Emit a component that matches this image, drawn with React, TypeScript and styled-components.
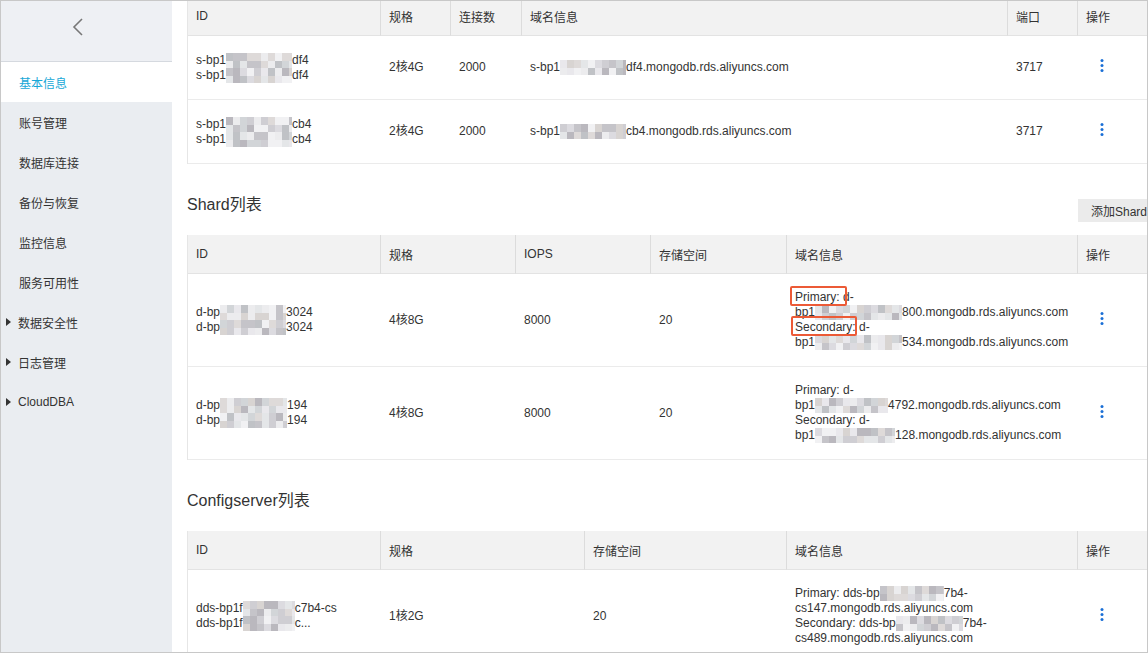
import React from "react";
import styled, { createGlobalStyle } from "styled-components";

const GlobalStyle = createGlobalStyle`
  html, body {
    margin: 0;
    padding: 0;
    background: #fff;
  }
  body {
    font-family: "Liberation Sans", Arial, "Noto Sans CJK SC", sans-serif;
    font-size: 12px;
    color: #333;
  }
`;

const Frame = styled.div`
  width: 1148px;
  height: 653px;
  box-sizing: border-box;
  border: 1px solid #c8c8c8;
  display: flex;
  overflow: hidden;
`;

const Sidebar = styled.nav`
  width: 171px;
  flex: none;
  background: #eaedf1;
  display: flex;
  flex-direction: column;
`;

const SideHead = styled.div`
  height: 61px;
  border-bottom: 1px solid #d5d9df;
  background: #eef0f4;
  display: flex;
  align-items: flex-start;
  padding: 17px 0 0 71px;
  box-sizing: border-box;
`;

const NavItem = styled.div<{ $active?: boolean; $tree?: boolean }>`
  height: 40px;
  display: flex;
  align-items: center;
  gap: 7px;
  padding-left: ${(p) => (p.$tree ? 5 : 18)}px;
  background: ${(p) => (p.$active ? "#fff" : "transparent")};
  color: ${(p) => (p.$active ? "#17a8d7" : "#333")};
  font-size: 12px;
`;

const Caret = styled.span`
  width: 0;
  height: 0;
  border-top: 4px solid transparent;
  border-bottom: 4px solid transparent;
  border-left: 5px solid #333;
`;

const Main = styled.main`
  flex: 1;
  min-width: 0;
  background: #fff;
  padding-left: 15px;
  overflow: hidden;
`;

const Content = styled.div`
  width: 960px;
`;

const SectionHead = styled.div`
  display: flex;
  justify-content: space-between;
  align-items: flex-end;
  margin: 29px 0 12px;
`;

const SectionTitle = styled.h3`
  margin: 0;
  padding-bottom: 6px;
  font-size: 16px;
  line-height: 24px;
  font-weight: normal;
  color: #333;
`;

const AddButton = styled.button`
  flex: none;
  height: 23px;
  margin: 0 -13px 1px 0;
  padding: 0 13px;
  border: none;
  background: #ebebeb;
  font: inherit;
  font-size: 12px;
  color: #333;
`;

const Table = styled.table<{ $lift?: boolean }>`
  width: 960px;
  table-layout: fixed;
  border-collapse: separate;
  border-spacing: 0;
  border-left: 1px solid #e6e6e6;
  margin-top: ${(p) => (p.$lift ? -4 : 0)}px;
`;

const Th = styled.th`
  height: 38px;
  padding: 0 8px;
  text-align: left;
  font-weight: normal;
  font-size: 12px;
  color: #333;
  background: #f2f2f2;
  border-bottom: 1px solid #e3e3e3;
  border-right: 1px solid #dcdcdc;
  &:last-child {
    border-right: none;
  }
`;

const Td = styled.td<{ $h: number }>`
  height: ${(p) => p.$h}px;
  padding: 0 8px;
  vertical-align: middle;
  line-height: 15px;
  white-space: nowrap;
  border-bottom: 1px solid #ebebeb;
  color: #333;
`;

const KebabCell = styled(Td)`
  padding-left: 22px;
`;

const KebabSvg = styled.svg`
  display: block;
  fill: #1a6fd6;
  transform: translateY(-2px);
`;

const BlurBox = styled.span<{ $w: number }>`
  display: inline-block;
  width: ${(p) => p.$w}px;
  height: 15px;
  vertical-align: top;
`;

const Marked = styled.span<{ $l: number; $r: number }>`
  position: relative;
  &::after {
    content: "";
    position: absolute;
    left: -${(p) => p.$l}px;
    right: -${(p) => p.$r}px;
    top: -4px;
    bottom: -2px;
    border: 2px solid #ec5a36;
    border-radius: 2px;
  }
`;

const PALETTE = [
  "#e9e8ec",
  "#dcdbe0",
  "#cfced3",
  "#c5c4c9",
  "#d8d4d2",
  "#e4e6e8",
  "#c0c2c6",
  "#f1f1f3",
  "#d2d5d8",
  "#bab8be",
  "#dedad9",
  "#ececee",
];

function mosaic(w: number, seed: number) {
  let s = (seed * 7919 + 104729) % 233280;
  const rnd = () => {
    s = (s * 9301 + 49297) % 233280;
    return s / 233280;
  };
  const row = () => {
    const stops: string[] = [];
    for (let x = 0; x < w; x += 7) {
      const c = PALETTE[Math.floor(rnd() * PALETTE.length)];
      stops.push(`${c} ${x}px ${Math.min(x + 7, w)}px`);
    }
    return `linear-gradient(90deg, ${stops.join(", ")})`;
  };
  return `${row()} 0 0 / 100% 8px no-repeat, ${row()} 0 8px / 100% 7px no-repeat`;
}

const Blur = ({ w, seed }: { w: number; seed: number }) => (
  <BlurBox $w={w} style={{ background: mosaic(w, seed) }} />
);

const Kebab = () => (
  <KebabSvg width="4" height="13" viewBox="0 0 4 13">
    <circle cx="2" cy="1.5" r="1.5" />
    <circle cx="2" cy="6.5" r="1.5" />
    <circle cx="2" cy="11.5" r="1.5" />
  </KebabSvg>
);

const Chevron = () => (
  <svg width="12" height="18" viewBox="0 0 12 18">
    <polyline points="10,1 2,9 10,17" fill="none" stroke="#777" strokeWidth="1.6" />
  </svg>
);

type Col = { label: string; width: number };

const DataTable = ({
  cols,
  rows,
  rowHeight,
  lift,
}: {
  cols: Col[];
  rows: React.ReactNode[][];
  rowHeight: number;
  lift?: boolean;
}) => (
  <Table $lift={lift}>
    <colgroup>
      {cols.map((c) => (
        <col key={c.label} style={{ width: c.width }} />
      ))}
    </colgroup>
    <thead>
      <tr>
        {cols.map((c) => (
          <Th key={c.label}>{c.label}</Th>
        ))}
      </tr>
    </thead>
    <tbody>
      {rows.map((r, i) => (
        <tr key={i}>
          {r.map((cell, j) => (
            <Td key={j} $h={rowHeight}>
              {cell}
            </Td>
          ))}
          <KebabCell $h={rowHeight}>
            <Kebab />
          </KebabCell>
        </tr>
      ))}
    </tbody>
  </Table>
);

const DOMAIN = ".mongodb.rds.aliyuncs.com";

const mongosCols: Col[] = [
  { label: "ID", width: 193 },
  { label: "规格", width: 70 },
  { label: "连接数", width: 71 },
  { label: "域名信息", width: 486 },
  { label: "端口", width: 70 },
  { label: "操作", width: 69 },
];

const mongosRows: React.ReactNode[][] = [
  [
    <>
      s-bp1<Blur w={66} seed={1} />df4
      <br />
      s-bp1<Blur w={66} seed={2} />df4
    </>,
    "2核4G",
    "2000",
    <>
      s-bp1<Blur w={66} seed={3} />df4{DOMAIN}
    </>,
    "3717",
  ],
  [
    <>
      s-bp1<Blur w={66} seed={4} />cb4
      <br />
      s-bp1<Blur w={66} seed={5} />cb4
    </>,
    "2核4G",
    "2000",
    <>
      s-bp1<Blur w={66} seed={6} />cb4{DOMAIN}
    </>,
    "3717",
  ],
];

const shardCols: Col[] = [
  { label: "ID", width: 193 },
  { label: "规格", width: 135 },
  { label: "IOPS", width: 135 },
  { label: "存储空间", width: 136 },
  { label: "域名信息", width: 291 },
  { label: "操作", width: 69 },
];

const shardRows: React.ReactNode[][] = [
  [
    <>
      d-bp<Blur w={66} seed={7} />3024
      <br />
      d-bp<Blur w={66} seed={8} />3024
    </>,
    "4核8G",
    "8000",
    "20",
    <>
      <Marked $l={5} $r={7}>Primary:</Marked> d-
      <br />
      bp1<Blur w={87} seed={9} />800{DOMAIN}
      <br />
      <Marked $l={4} $r={1}>Secondary:</Marked> d-
      <br />
      bp1<Blur w={87} seed={10} />534{DOMAIN}
    </>,
  ],
  [
    <>
      d-bp<Blur w={67} seed={11} />194
      <br />
      d-bp<Blur w={67} seed={12} />194
    </>,
    "4核8G",
    "8000",
    "20",
    <>
      Primary: d-
      <br />
      bp1<Blur w={73} seed={13} />4792{DOMAIN}
      <br />
      Secondary: d-
      <br />
      bp1<Blur w={80} seed={14} />128{DOMAIN}
    </>,
  ],
];

const configCols: Col[] = [
  { label: "ID", width: 193 },
  { label: "规格", width: 204 },
  { label: "存储空间", width: 202 },
  { label: "域名信息", width: 291 },
  { label: "操作", width: 69 },
];

const configRows: React.ReactNode[][] = [
  [
    <>
      dds-bp1f<Blur w={52} seed={15} />c7b4-cs
      <br />
      dds-bp1f<Blur w={52} seed={16} />c...
    </>,
    "1核2G",
    "20",
    <>
      Primary: dds-bp<Blur w={64} seed={17} />7b4-
      <br />
      cs147{DOMAIN}
      <br />
      Secondary: dds-bp<Blur w={67} seed={18} />7b4-
      <br />
      cs489{DOMAIN}
    </>,
  ],
];

const navItems: { label: string; active?: boolean; tree?: boolean }[] = [
  { label: "基本信息", active: true },
  { label: "账号管理" },
  { label: "数据库连接" },
  { label: "备份与恢复" },
  { label: "监控信息" },
  { label: "服务可用性" },
  { label: "数据安全性", tree: true },
  { label: "日志管理", tree: true },
  { label: "CloudDBA", tree: true },
];

export default function App() {
  return (
    <>
      <GlobalStyle />
      <Frame>
        <Sidebar>
          <SideHead>
            <Chevron />
          </SideHead>
          {navItems.map((n) => (
            <NavItem key={n.label} $active={n.active} $tree={n.tree}>
              {n.tree && <Caret />}
              {n.label}
            </NavItem>
          ))}
        </Sidebar>
        <Main>
          <Content>
            <DataTable cols={mongosCols} rows={mongosRows} rowHeight={63} lift />

            <SectionHead>
              <SectionTitle>Shard列表</SectionTitle>
              <AddButton>添加Shard</AddButton>
            </SectionHead>
            <DataTable cols={shardCols} rows={shardRows} rowHeight={92} />

            <SectionHead>
              <SectionTitle>Configserver列表</SectionTitle>
            </SectionHead>
            <DataTable cols={configCols} rows={configRows} rowHeight={92} />
          </Content>
        </Main>
      </Frame>
    </>
  );
}
